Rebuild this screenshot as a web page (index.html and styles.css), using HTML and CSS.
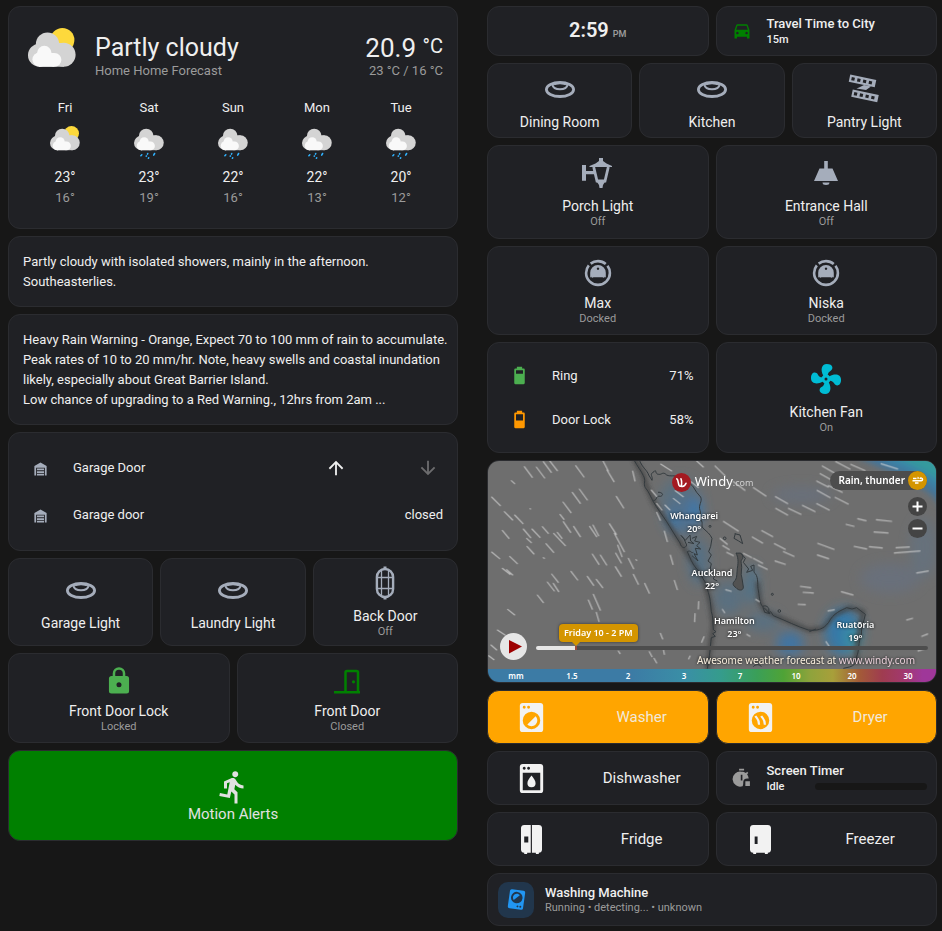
FILE: index.html
```html
<!DOCTYPE html>
<html lang="en">
<head>
    <meta charset="UTF-8">
    <title>Home</title>
    <meta name="viewport" content="width=device-width, initial-scale=1.0">
    <link rel="stylesheet" href="styles.css">
</head>
<body>
    <!-- shared icons -->
    <svg class="sprite" aria-hidden="true">
        <symbol id="cloud" viewBox="0 0 48 56">
            <g fill="#d4d4d4"><circle cx="11.5" cy="27.2" r="11.5"/><circle cx="19.5" cy="16" r="11.6"/><circle cx="35.6" cy="26.8" r="12"/><path d="M11 15h25v23.7H11z"/></g>
            <g fill="#f9f9f9"><circle cx="11.5" cy="31.6" r="7.1"/><circle cx="16.3" cy="25" r="7.2"/><circle cx="26.5" cy="31.8" r="6.9"/><path d="M11 25h15v13.7H11z"/></g>
        </symbol>
        <symbol id="partly" viewBox="0 0 48 56">
            <circle cx="34.4" cy="12" r="12" fill="#fdd93c"/>
            <use href="#cloud" width="48" height="56"/>
        </symbol>
        <symbol id="rainy" viewBox="0 0 48 56">
            <use href="#cloud" width="48" height="56"/>
            <g stroke="#30b3ff" stroke-width="2.500" stroke-linecap="round"><path d="M12.500 46l-1.500 1.500M22 44l-.5 1M33 44l-1.500 2.500M23.500 51l-.5 .5M20 48l-.5 .3"/></g>
        </symbol>
        <symbol id="ring" viewBox="0 0 36 36">
            <g fill="none" stroke="currentColor"><ellipse cx="18" cy="18.500" rx="13.600" ry="7" stroke-width="2.800"/><path d="M10.500 14c1 5.600 14 5.600 15 0M12 13.300c3-1.500 9-1.500 12 0" stroke-width="2"/></g>
        </symbol>
        <symbol id="garage" viewBox="0 0 24 24"><path d="M19,20H17V11H7V20H5V9L12,5L19,9V20M8,12H16V14H8V12M8,15H16V17H8V15M16,18V20H8V18H16Z"/></symbol>
        <symbol id="vacuum" viewBox="0 0 36 36">
            <circle cx="18" cy="18" r="11.900" fill="none" stroke="currentColor" stroke-width="2.600" stroke-dasharray="8.400 2.500 53 2.500 8.400 0" transform="rotate(-90 18 18)"/>
            <path fill-rule="evenodd" d="M10.200 22.500v-4.700a7.800 7.800 0 0 1 15.600 0v4.700l-1.500-.8v1.300l-1.800-.8h-9l-1.800.8v-1.300zM18 12.500a1.200 1.200 0 1 0 .01 0z"/>
        </symbol>
    </svg>

    <main class="dashboard">
        <section class="column">
            <article class="card weather">
                <div class="weather-now">
                    <svg class="weather-icon"><use href="#partly"/></svg>
                    <div class="weather-name">
                        <h1>Partly cloudy</h1>
                        <p>Home Home Forecast</p>
                    </div>
                    <div class="weather-temp">
                        <div class="temp">20.9 <sup>°C</sup></div>
                        <p>23 °C / 16 °C</p>
                    </div>
                </div>
                <div class="forecast">
                    <div class="day"><span>Fri</span><svg><use href="#partly"/></svg><b>23°</b><i>16°</i></div>
                    <div class="day"><span>Sat</span><svg><use href="#rainy"/></svg><b>23°</b><i>19°</i></div>
                    <div class="day"><span>Sun</span><svg><use href="#rainy"/></svg><b>22°</b><i>16°</i></div>
                    <div class="day"><span>Mon</span><svg><use href="#rainy"/></svg><b>22°</b><i>13°</i></div>
                    <div class="day"><span>Tue</span><svg><use href="#rainy"/></svg><b>20°</b><i>12°</i></div>
                </div>
            </article>

            <article class="card note">
                <p>Partly cloudy with isolated showers, mainly in the afternoon.<br>Southeasterlies.</p>
            </article>

            <article class="card note">
                <p>Heavy Rain Warning - Orange, Expect 70 to 100 mm of rain to accumulate. Peak rates of 10 to 20 mm/hr. Note, heavy swells and coastal inundation likely, especially about Great Barrier Island.<br>Low chance of upgrading to a Red Warning., 12hrs from 2am ...</p>
            </article>

            <article class="card entities garage">
                <div class="entity">
                    <svg class="entity-icon"><use href="#garage"/></svg>
                    <span>Garage Door</span>
                    <div class="cover-controls">
                        <button aria-label="Open"><svg viewBox="0 0 24 24"><path d="M13,20H11V8L5.500,13.500L4.080,12.080L12,4.160L19.920,12.080L18.500,13.500L13,8V20Z"/></svg></button>
                        <button aria-label="Close" disabled><svg viewBox="0 0 24 24"><path d="M11,4H13V16L18.500,10.500L19.920,11.920L12,19.840L4.080,11.920L5.500,10.500L11,16V4Z"/></svg></button>
                    </div>
                </div>
                <div class="entity">
                    <svg class="entity-icon"><use href="#garage"/></svg>
                    <span>Garage door</span>
                    <span class="state">closed</span>
                </div>
            </article>

            <div class="row thirds tall">
                <button class="card tile"><svg class="icon"><use href="#ring"/></svg><span class="name">Garage Light</span></button>
                <button class="card tile"><svg class="icon"><use href="#ring"/></svg><span class="name">Laundry Light</span></button>
                <button class="card tile">
                    <svg class="icon" viewBox="0 0 36 36"><g fill="none" stroke="currentColor"><rect x="9.900" y="4" width="16.200" height="28" rx="8.100" stroke-width="2.400"/><path d="M14.500 4v28M21.500 4v28M10 12.500h16M10 23.500h16" stroke-width="1.300"/><path d="M18 1.500v2M18 32.500v2" stroke-width="3"/></g></svg>
                    <span class="name">Back Door</span><span class="sub">Off</span>
                </button>
            </div>

            <div class="row halves locks">
                <button class="card tile">
                    <svg class="icon green" viewBox="-2.300 -2.300 28.600 28.600"><path d="M12,17A2,2 0 0,0 14,15C14,13.890 13.100,13 12,13A2,2 0 0,0 10,15A2,2 0 0,0 12,17M18,8A2,2 0 0,1 20,10V20A2,2 0 0,1 18,22H6A2,2 0 0,1 4,20V10C4,8.890 4.900,8 6,8H7V6A5,5 0 0,1 12,1A5,5 0 0,1 17,6V8H18M12,3A3,3 0 0,0 9,6V8H15V6A3,3 0 0,0 12,3Z"/></svg>
                    <span class="name">Front Door Lock</span><span class="sub">Locked</span>
                </button>
                <button class="card tile">
                    <svg class="icon darkgreen" viewBox="0 0 36 36"><path d="M5 29.300h26M16.500 29V9.500a1.500 1.500 0 0 1 1.500-1.500h9.500a1.500 1.500 0 0 1 1.500 1.500V29" fill="none" stroke="currentColor" stroke-width="2.500"/><circle cx="24.500" cy="18.800" r="1.600"/></svg>
                    <span class="name">Front Door</span><span class="sub">Closed</span>
                </button>
            </div>

            <button class="card tile motion">
                <svg class="icon" viewBox="0 0 24 24"><path d="M13.500,5.500C14.590,5.500 15.500,4.580 15.500,3.500C15.500,2.380 14.590,1.500 13.500,1.500C12.390,1.500 11.500,2.380 11.500,3.500C11.500,4.580 12.390,5.500 13.500,5.500M9.890,19.380L10.890,15L13,17V23H15V15.500L12.890,13.500L13.500,10.500C14.790,12 16.790,13 19,13V11C17.090,11 15.500,10 14.690,8.580L13.690,7C13.290,6.380 12.690,6 12,6C11.690,6 11.500,6.080 11.190,6.080L6,8.280V13H8V9.580L9.790,8.880L8.190,17L3.290,16L2.890,18L9.890,19.380Z"/></svg>
                <span class="name">Motion Alerts</span>
            </button>
        </section>

        <section class="column">
            <div class="row halves top">
                <article class="card clock"><time>2:59</time><small>PM</small></article>
                <article class="card info">
                    <svg class="info-icon darkgreen" viewBox="0 0 24 24"><path fill-rule="evenodd" d="M18.920 5c-.2-.6-.76-1-1.420-1h-11c-.66 0-1.220.4-1.420 1L3 11v10h3v-2h12v2h3V11zM6.500 13a1.500 1.500 0 1 1-.01 0zM17.500 13a1.500 1.500 0 1 1-.01 0zM5 10.500l1.500-4.700h11l1.500 4.700z"/></svg>
                    <div class="info-text"><strong>Travel Time to City</strong><span>15m</span></div>
                </article>
            </div>

            <div class="row thirds lights">
                <button class="card tile"><svg class="icon"><use href="#ring"/></svg><span class="name">Dining Room</span></button>
                <button class="card tile"><svg class="icon"><use href="#ring"/></svg><span class="name">Kitchen</span></button>
                <button class="card tile">
                    <svg class="icon" viewBox="0 0 36 36">
                        <g fill="none" stroke="currentColor"><path d="M3.500 7.200L29.500 12.700M6 22.200L32 27.700" stroke-width="7.400"/><g stroke="#202125" stroke-width="3.200" stroke-dasharray="3.200 2.700"><path d="M5.500 7.600L28.500 12.500M8 22.600L31 27.500"/></g></g>
                        <path d="M13 16.500l5-2.500 7 1.500-5 3.500-9.500-1.500z"/>
                    </svg>
                    <span class="name">Pantry Light</span>
                </button>
            </div>

            <div class="row halves porch">
                <button class="card tile">
                    <svg class="icon" viewBox="0 0 36 36"><path d="M2 10h4v15.700H2zM6 16h8v3.300H6zM19 3h4v3l3.500 2.500L32 11v1H9.500v-1l6-2.500L19 6zM16.300 26h9.200l-2.500 4-.5 3h-3l-.5-3z"/><path d="M13.700 12l3.300 14h8l3.300-14" fill="none" stroke="currentColor" stroke-width="2.800"/></svg>
                    <span class="name">Porch Light</span><span class="sub">Off</span>
                </button>
                <button class="card tile">
                    <svg class="icon" viewBox="0 0 36 36"><path d="M16.200 6h3.600v7.500h4.700L30 26H6l5.500-12.500h4.700zM14.500 27.500h7a3.500 2.500 0 0 1-7 0z"/></svg>
                    <span class="name">Entrance Hall</span><span class="sub">Off</span>
                </button>
            </div>

            <div class="row halves vacuums">
                <button class="card tile"><svg class="icon"><use href="#vacuum"/></svg><span class="name">Max</span><span class="sub">Docked</span></button>
                <button class="card tile"><svg class="icon"><use href="#vacuum"/></svg><span class="name">Niska</span><span class="sub">Docked</span></button>
            </div>

            <div class="row halves power">
                <article class="card entities">
                    <div class="entity">
                        <svg class="entity-icon green" viewBox="0 0 24 24"><path d="M16,10H8V6H16M16.670,4H15V2H9V4H7.330A1.330,1.330 0 0,0 6,5.330V20.670C6,21.400 6.600,22 7.330,22H16.670A1.330,1.330 0 0,0 18,20.670V5.330C18,4.600 17.400,4 16.670,4Z"/></svg>
                        <span>Ring</span><span class="state">71%</span>
                    </div>
                    <div class="entity">
                        <svg class="entity-icon amber" viewBox="0 0 24 24"><path d="M16,13H8V6H16M16.670,4H15V2H9V4H7.330A1.330,1.330 0 0,0 6,5.330V20.670C6,21.400 6.600,22 7.330,22H16.670A1.330,1.330 0 0,0 18,20.670V5.330C18,4.600 17.400,4 16.670,4Z"/></svg>
                        <span>Door Lock</span><span class="state">58%</span>
                    </div>
                </article>
                <button class="card tile">
                    <svg class="icon cyan" viewBox="0 0 24 24"><path d="M12,11A1,1 0 0,0 11,12A1,1 0 0,0 12,13A1,1 0 0,0 13,12A1,1 0 0,0 12,11M12.500,2C17,2 17.110,5.570 14.750,6.750C13.760,7.240 13.320,8.290 13.130,9.220C13.610,9.420 14.030,9.730 14.350,10.130C18.050,8.130 22.030,8.920 22.030,12.500C22.030,17 18.460,17.100 17.280,14.730C16.780,13.740 15.720,13.300 14.790,13.110C14.590,13.590 14.280,14 13.880,14.340C15.870,18.030 15.080,22 11.500,22C7,22 6.910,18.420 9.270,17.240C10.250,16.750 10.690,15.710 10.890,14.790C10.400,14.590 9.970,14.270 9.650,13.870C5.960,15.850 2,15.070 2,11.500C2,7 5.560,6.890 6.740,9.260C7.240,10.250 8.290,10.680 9.220,10.870C9.410,10.390 9.730,9.970 10.140,9.650C8.150,5.960 8.940,2 12.500,2Z"/></svg>
                    <span class="name">Kitchen Fan</span><span class="sub">On</span>
                </button>
            </div>

            <article class="card map">
                <div class="map-stage">
                    <svg class="map-art" viewBox="24 18 1344 624" preserveAspectRatio="xMidYMid slice" aria-hidden="true">
                        <defs>
                            <filter id="soft" x="-50%" y="-50%" width="200%" height="200%"><feGaussianBlur stdDeviation="18"/></filter>
                            <filter id="corner" x="-20%" y="-20%" width="140%" height="140%"><feGaussianBlur stdDeviation="9"/></filter>
                            <filter id="shade" x="-10%" y="-10%" width="120%" height="120%"><feGaussianBlur stdDeviation="7"/></filter>
                        </defs>
                        <path fill="#6e6e6e" d="M0 0h1400v660H0z"/>
                        <!-- rain -->
                        <g filter="url(#soft)">
                            <ellipse cx="600" cy="130" rx="60" ry="60" fill="#5c6f7e"/>
                            <ellipse cx="610" cy="180" rx="55" ry="60" fill="#52708a"/>
                            <ellipse cx="648" cy="165" rx="20" ry="38" fill="#3a78ad"/>
                            <ellipse cx="578" cy="195" rx="22" ry="28" fill="#3f74a0"/>
                            <ellipse cx="655" cy="320" rx="30" ry="70" fill="#557084"/>
                            <ellipse cx="745" cy="430" rx="45" ry="50" fill="#5a7080"/>
                            <ellipse cx="815" cy="390" rx="20" ry="60" fill="#4f7289"/>
                            <ellipse cx="930" cy="565" rx="40" ry="35" fill="#3f75a3"/>
                            <ellipse cx="850" cy="500" rx="50" ry="30" fill="#5a7080"/>
                            <ellipse cx="1090" cy="530" rx="55" ry="70" fill="#3578a8"/>
                            <ellipse cx="1115" cy="550" rx="25" ry="40" fill="#3b8fa4"/>
                            <ellipse cx="965" cy="120" rx="90" ry="25" fill="#69707a"/>
                            <ellipse cx="1230" cy="370" rx="90" ry="45" fill="#69707a"/>
                            <ellipse cx="1330" cy="280" rx="40" ry="90" fill="#66717c"/>
                        </g>
                        <g filter="url(#corner)">
                            <path fill="#43759a" d="M1130 0c70 50 190 60 260 160V0z"/>
                            <path fill="#3a84a8" d="M1190 0c50 40 140 50 200 120V0z"/>
                            <path fill="#369a9e" d="M1240 0c40 25 90 40 150 85V0z"/>
                        </g>
                        <!-- coast shadow and coast line -->
                        <g fill="none" stroke-linejoin="round">
                            <g filter="url(#shade)" stroke="#3c3c3c" stroke-width="12" opacity=".8">
                                <path d="M462 10L490 60L498 90L520 140L560 200L610 278L650 340L675 385L692 450L700 510L690 580L682 645"/>
                                <path d="M832 380L840 440L852 465L885 482L985 525L1030 520L1062 480L1110 458L1150 470L1133 560L1128 620"/>
                            </g>
                            <path fill="#525252" d="M768 294C774 306 776 318 772 340C770 354 772 366 766 376C756 384 758 392 768 398C776 408 790 408 790 396L786 370C780 356 788 340 784 326C780 310 792 316 788 302C784 290 776 296 768 294"/>
                            <g stroke="#333a3e" stroke-width="3">
                                <path d="M462 15C472 34 484 48 490 62C499 76 489 86 496 98C508 112 514 130 520 140C530 158 548 182 560 200C570 216 588 246 600 264C604 280 616 282 620 270L612 252L602 240M622 290C630 308 636 326 650 342L660 352C664 366 674 376 678 388C680 400 690 420 692 450L694 470C700 484 698 506 700 524L708 530L698 536L706 544L694 548C690 580 690 600 682 641"/>
                                <path d="M478 15C488 40 502 46 506 60L516 76C520 64 506 58 522 50C530 40 524 58 536 58C546 60 548 48 560 60C572 66 584 58 596 68C612 76 632 84 640 96L650 112L662 126C668 140 654 150 660 166C666 176 652 184 662 194C672 204 660 214 672 222C680 230 690 236 696 250L692 274L686 290L694 300L684 318"/>
                                <path d="M520 136C534 138 524 120 542 124C556 118 540 110 534 112M622 290C634 284 632 296 640 292M636 250L650 244L644 258L660 262L650 272L662 282L646 280L652 300L642 296L654 318L636 302M606 244L616 256L630 240L632 258L642 266L624 262M684 318L694 326L690 344L706 356L700 372L712 378"/>
                                <path d="M768 294C774 306 776 318 772 340C770 354 772 366 766 376C756 384 758 392 768 398C776 408 790 408 790 396L786 370C780 356 788 340 784 326C780 310 792 316 788 302C784 290 776 296 768 294M784 296L796 310L790 322L806 342L800 352L818 346L812 334L822 330L822 352C836 362 832 386 834 400C838 420 838 446 848 454C862 448 872 462 864 474L872 470L880 482C920 498 950 514 985 525C1010 528 1030 524 1046 502C1060 474 1084 466 1100 458L1116 462L1130 458L1156 478C1152 500 1142 520 1144 540C1134 560 1138 590 1130 604C1132 624 1122 632 1108 636L1090 640M848 454L854 472L870 476L852 458M764 236L780 240L788 266L776 258L762 250L766 236"/>
                                <circle cx="877" cy="418" r="3"/><circle cx="898" cy="468" r="4"/><circle cx="734" cy="250" r="4"/><circle cx="690" cy="214" r="3"/><path d="M820 635c6-8 20-8 24 0M1008 522l-20 8"/>
                            </g>
                        </g>
                        <!-- wind -->
                        <g stroke="#dcdcdc" stroke-width="3.500" stroke-linecap="round" opacity=".72" fill="none">
                            <path d="M133 35L157 67M169 36L194 69M190 20L214 52M208 16L232 47M287 32L312 66M368 16L385 48M381 45L402 80M458 48L465 78M94 77L104 86M35 126L61 152M277 112L301 145M298 102L322 135M249 141L273 173M409 124L431 159M73 170L98 195M104 180L129 206M240 178L252 193M67 226L87 250M130 222L152 248M156 222L180 247M187 215L205 235M250 200L272 232M281 214L301 245M221 235L256 272M232 232L246 250M329 214L350 245M339 210L356 242M388 206L409 238M403 235L433 290M413 270L426 305M141 274L162 297M140 250L154 263M198 266L221 292M35 291L59 311M89 304L112 326M67 340L90 358M80 344L98 360M337 297L357 328M361 300L380 330M407 294L424 324M445 310L461 341M406 335L424 364M215 357L235 382M202 381L223 408M220 385L236 410M273 349L293 375M322 364L341 391M349 373L368 398M460 358L475 388M494 385L508 415M172 420L190 443M83 463L104 480M325 435L337 463M340 418L361 466M349 472L357 500M52 525L75 540M33 570L50 585M26 602L42 614M150 161l2 1M190 308l3 2M468 314l2 2M415 588L420 596"/>
                            <path d="M530 172L541 196M553 228L562 260M571 300L579 328M583 376L592 404M656 440L655 462M645 476L644 500M541 535L548 552M508 590L516 605M522 610L530 624M550 582L553 598M672 545L665 562M630 603L626 612M542 27L575 48M514 105L530 124M530 145L546 165M586 107L610 125M580 130L600 146M555 150L570 165M633 80L655 98M648 16L670 36"/>
                            <path transform="translate(690)" d="M15 33L45 62M70 80L105 106M130 98L168 123M196 125L233 146M197 160L233 180M235 160L273 178M277 151L315 170M320 146L358 165M321 106L360 128M337 33L375 55M330 56L365 75M320 78L355 96M355 92L397 112M375 127L415 147M377 20L420 42M422 28L465 47M513 26L563 42M408 208L432 214M443 191L468 197M499 194L545 199M492 231L534 234M155 227L188 245M127 246L158 264M193 266L226 283M220 290L252 304M323 265L372 283M322 300L356 311M432 274L470 282M478 275L517 279M558 278L598 276M553 294L630 288M620 354L655 348M195 318L226 328M145 330L172 343M40 199L85 228M271 394L302 398M279 412L310 414M264 448L286 449M394 410L429 420M354 468L373 464M590 495L608 490M635 544L653 537M624 588L642 582M348 560L358 575M30 250L52 268M100 295L125 308M130 310L158 325M38 272L58 284M50 292L70 302M47 404L64 409M37 463L44 473M110 538L120 544M137 433L148 440"/>
                        </g>
                    </svg>

                    <a class="windy" href="#windy">
                        <svg viewBox="0 0 18 18"><circle cx="9" cy="9" r="9" fill="#a41a21"/><path d="M4.500 5.500c2 1 1 6.500 3 7s2-4.500 1-7M8.500 12.500c2.500.8 4-.8 4.800-2.800" fill="none" stroke="#fff" stroke-width="1.500" stroke-linecap="round"/></svg>
                        <span>Windy<small>.com</small></span>
                    </a>
                    <div class="place whangarei">Whangarei<br>20°</div>
                    <div class="place auckland">Auckland<br>22°</div>
                    <div class="place hamilton">Hamilton<br>23°</div>
                    <div class="place ruatoria">Ruatōria<br>19°</div>

                    <button class="layer">Rain, thunder
                        <svg viewBox="0 0 19 19"><circle cx="9.500" cy="9.500" r="9.500" fill="#d49500"/><path d="M5 7.500h3.500M4.500 9.700h8.700a1.300 1.300 0 1 0-1.200-1.700M7 12h3.500M9.500 7.500c.8 0 .8-1 0-1" fill="none" stroke="#fff" stroke-width="1.500"/></svg>
                    </button>
                    <div class="zoom">
                        <button aria-label="Zoom in"><svg viewBox="0 0 19 19"><path d="M9.500 4.500v10M4.500 9.500h10"/></svg></button>
                        <button aria-label="Zoom out"><svg viewBox="0 0 19 19"><path d="M4.500 9.500h10"/></svg></button>
                    </div>

                    <div class="player">
                        <button class="play" aria-label="Play"><svg viewBox="0 0 27 27"><path d="M9 7l13 6.500L9 20.500z" fill="#9d0000"/></svg></button>
                        <div class="timeline">
                            <output class="when" for="when">Friday 10 - 2 PM</output>
                            <input id="when" type="range" min="0" max="100" value="10" aria-label="Forecast time">
                        </div>
                    </div>
                    <p class="credit">Awesome weather forecast at <a href="#windy">www.windy.com</a></p>
                </div>
                <div class="legend"><span>mm</span><span>1.5</span><span>2</span><span>3</span><span>7</span><span>10</span><span>20</span><span>30</span></div>
            </article>

            <div class="row halves appliances">
                <button class="card appliance running">
                    <svg viewBox="0 0 24 24"><path d="M14.830,11.170C16.390,12.730 16.390,15.260 14.830,16.830C13.260,18.390 10.730,18.390 9.170,16.830L14.830,11.170M6,2H18A2,2 0 0,1 20,4V20A2,2 0 0,1 18,22H6A2,2 0 0,1 4,20V4A2,2 0 0,1 6,2M7,4A1,1 0 0,0 6,5A1,1 0 0,0 7,6A1,1 0 0,0 8,5A1,1 0 0,0 7,4M10,4A1,1 0 0,0 9,5A1,1 0 0,0 10,6A1,1 0 0,0 11,5A1,1 0 0,0 10,4M12,8A6,6 0 0,0 6,14A6,6 0 0,0 12,20A6,6 0 0,0 18,14A6,6 0 0,0 12,8Z"/></svg>
                    <span>Washer</span>
                </button>
                <button class="card appliance running">
                    <svg viewBox="0 0 24 24"><path d="M6,2H18A2,2 0 0,1 20,4V20A2,2 0 0,1 18,22H6A2,2 0 0,1 4,20V4A2,2 0 0,1 6,2M7,4A1,1 0 0,0 6,5A1,1 0 0,0 7,6A1,1 0 0,0 8,5A1,1 0 0,0 7,4M10,4A1,1 0 0,0 9,5A1,1 0 0,0 10,6A1,1 0 0,0 11,5A1,1 0 0,0 10,4M12,8A6,6 0 0,0 6,14A6,6 0 0,0 12,20A6,6 0 0,0 18,14A6,6 0 0,0 12,8Z"/><path d="M8.500 11c1.500 2.500 2.500 2 2.500 6M12.500 11c1.500 2.500 2.500 2 2.500 6" fill="none" stroke="currentColor" stroke-width="1.500"/></svg>
                    <span>Dryer</span>
                </button>
                <button class="card appliance">
                    <svg viewBox="0 0 24 24"><path fill-rule="evenodd" d="M6 2h12a2 2 0 0 1 2 2v16a2 2 0 0 1-2 2H6a2 2 0 0 1-2-2V4a2 2 0 0 1 2-2zM7 4a1 1 0 1 0 .01 0zM10 4a1 1 0 1 0 .01 0zM6 8v12h12V8z"/><path d="M12 10c1.500 2 2.800 3.400 2.800 5.200a2.800 2.800 0 0 1-5.600 0c0-1.800 1.300-3.200 2.800-5.200z"/></svg>
                    <span>Dishwasher</span>
                </button>
                <article class="card info timer">
                    <svg class="info-icon" viewBox="0 0 24 24"><path fill-rule="evenodd" d="M8.500 1h6v2h-6zM11.500 4.500c2 0 3.700.6 5.200 1.600L18.200 4.600l1.400 1.400-1.500 1.500c1 1.400 1.700 3 1.900 5h-1.500c-3.500 0-5 2-5 4.500 0 1.800 0 3-.8 4.800A9 9 0 1 1 11.500 4.500zM10.500 8v7h2V8zM16 16h5.500v5.500H16z"/></svg>
                    <div class="info-text">
                        <strong>Screen Timer</strong>
                        <div class="timer-state"><label for="timer">Idle</label><progress id="timer" max="100" value="0"></progress></div>
                    </div>
                </article>
                <button class="card appliance">
                    <svg viewBox="0 0 24 24"><path fill-rule="evenodd" d="M7 2h4.500v19H9v1H7v-1a2.200 2.200 0 0 1-2.200-2V4A2.200 2.200 0 0 1 7 2zM7 10v4h2.800v-4zM12.300 2H17a2.200 2.200 0 0 1 2.200 2v15a2.200 2.200 0 0 1-2.200 2v1h-2v-1h-2.700z"/></svg>
                    <span>Fridge</span>
                </button>
                <button class="card appliance">
                    <svg viewBox="0 0 24 24"><path fill-rule="evenodd" d="M7 2h10a2.200 2.200 0 0 1 2.200 2v15a2.200 2.200 0 0 1-2.200 2v1h-2v-1H9v1H7v-1a2.200 2.200 0 0 1-2.200-2V4A2.200 2.200 0 0 1 7 2zM8 10v5h2v-5z"/></svg>
                    <span>Freezer</span>
                </button>
            </div>

            <article class="card machine">
                <div class="badge">
                    <svg viewBox="0 0 24 24"><path transform="rotate(188 12 12)" d="M14.830,11.170C16.390,12.730 16.390,15.260 14.830,16.830C13.260,18.390 10.730,18.390 9.170,16.830L14.830,11.170M6,2H18A2,2 0 0,1 20,4V20A2,2 0 0,1 18,22H6A2,2 0 0,1 4,20V4A2,2 0 0,1 6,2M7,4A1,1 0 0,0 6,5A1,1 0 0,0 7,6A1,1 0 0,0 8,5A1,1 0 0,0 7,4M10,4A1,1 0 0,0 9,5A1,1 0 0,0 10,6A1,1 0 0,0 11,5A1,1 0 0,0 10,4M12,8A6,6 0 0,0 6,14A6,6 0 0,0 12,20A6,6 0 0,0 18,14A6,6 0 0,0 12,8Z"/></svg>
                </div>
                <div><strong>Washing Machine</strong><p>Running • detecting... • unknown</p></div>
            </article>
        </section>
    </main>
</body>
</html>
```
FILE: styles.css
```css
* {
    box-sizing: border-box;
}
body {
    margin: 0;
    background: #171717;
    color: #efefef;
    font-family: Roboto, 'Liberation Sans', sans-serif;
    font-size: 13px;
    line-height: 20px;
}
h1, p {
    margin: 0;
    font-weight: 400;
}
button {
    font: inherit;
    color: inherit;
    border: 0;
    padding: 0;
    background: none;
    cursor: pointer;
}
svg {
    fill: currentColor;
    flex: none;
}
.sprite {
    position: absolute;
    width: 0;
    height: 0;
}

/* grid */
.dashboard {
    display: grid;
    grid-template-columns: 1fr 1fr;
    align-items: start;
    gap: 29px;
    padding: 6px 5px 5px 8px;
}
.column {
    display: flex;
    flex-direction: column;
    gap: 7px;
    min-width: 0;
}
.row {
    display: grid;
    gap: 7px;
}
.halves {
    grid-template-columns: 1fr 1fr;
}
.thirds {
    grid-template-columns: 1fr 1fr 1fr;
}
.card {
    background: #202125;
    border: 1px solid #2b2c30;
    border-radius: 12px;
    min-width: 0;
}

/* weather */
.weather {
    padding: 21px 14px 20px 19px;
}
.weather-now {
    display: flex;
    gap: 19px;
    height: 48px;
}
.weather-icon {
    width: 48px;
    height: 56px;
}
.weather-name {
    flex: 1;
}
.weather-name h1, .temp {
    font-size: 25px;
    line-height: 32px;
    padding-top: 4px;
}
.weather-name p, .weather-temp p {
    color: #9b9b9b;
    line-height: 14px;
}
.weather-temp {
    text-align: right;
}
.temp {
    font-size: 26px;
}
.temp sup {
    font-size: 20px;
    line-height: 20px;
    vertical-align: 4px;
}
.forecast {
    display: grid;
    grid-template-columns: repeat(5, 1fr);
    padding-top: 22px;
    margin-left: -5px;
}
.day {
    display: flex;
    flex-direction: column;
    align-items: center;
}
.day svg {
    width: 30px;
    height: 35px;
    margin: 8px 0 5px;
}
.day b {
    font-size: 14px;
    font-weight: 400;
    line-height: 22px;
}
.day i {
    font-style: normal;
    color: #9b9b9b;
}

.note {
    padding: 15px 6px 14px 14px;
}

/* entity rows */
.entities {
    display: flex;
    flex-direction: column;
    justify-content: center;
    padding: 9px 14px;
}
.garage {
    gap: 7px;
    padding: 15px 14px;
}
.entity {
    display: flex;
    align-items: center;
    min-height: 40px;
}
.power .entities {
    gap: 4px;
}
.entity-icon {
    width: 21px;
    height: 21px;
    margin: 0 22px 0 7px;
    color: #a5adbb;
}
.entity-icon.green {
    color: #4caf50;
}
.entity-icon.amber {
    color: #ff9800;
}
.state {
    margin-left: auto;
}
.cover-controls {
    display: flex;
    gap: 52px;
    margin: 0 -5px 0 auto;
}
.cover-controls button {
    width: 40px;
    height: 40px;
}
.cover-controls button:disabled {
    color: #6c6c6e;
    cursor: default;
}
.cover-controls svg {
    display: block;
    width: 22px;
    height: 22px;
    margin: auto;
}

/* tiles */
.tile {
    display: flex;
    flex-direction: column;
    align-items: center;
    justify-content: center;
    padding: 5px;
}
.icon {
    width: 36px;
    height: 36px;
    margin-bottom: 6px;
    color: #a5adbb;
}
.name {
    font-size: 14px;
    line-height: 18px;
}
.sub {
    font-size: 11px;
    line-height: 14px;
    color: #9b9b9b;
}
.tall .tile {
    min-height: 88px;
}
.locks .tile {
    min-height: 90px;
}
.locks .icon, .vacuums .icon {
    margin-bottom: 3px;
}
.lights .tile {
    min-height: 75px;
}
.porch .tile {
    min-height: 94px;
}
.vacuums .tile {
    min-height: 89px;
}
.power .tile {
    min-height: 111px;
}
.icon.green {
    color: #4caf50;
}
.darkgreen {
    color: #008000;
}
.cyan {
    color: #00bcd4;
}
.motion {
    min-height: 91px;
    background: #008000;
    color: #e1e1e1;
}
.motion .icon {
    color: #e1e1e1;
    margin-bottom: 0;
}
.motion .name {
    font-size: 15px;
}

/* clock, travel time, timer */
.top .card {
    min-height: 50px;
}
.clock {
    display: flex;
    align-items: baseline;
    justify-content: center;
    gap: 4px;
    padding: 11px 10px 8px;
    line-height: 24px;
}
.clock time {
    font-size: 20px;
    font-weight: 600;
}
.clock small {
    font-size: 9px;
    font-weight: 600;
    color: #9b9b9b;
}
.info {
    display: flex;
    align-items: center;
    gap: 15px;
    padding: 6px 9px 6px 15px;
}
.info-icon {
    width: 20px;
    height: 20px;
}
.info-text {
    flex: 1;
}
.info strong, .machine strong {
    display: block;
    font-weight: 500;
    line-height: 16px;
}
.info span, .info label {
    display: block;
    font-size: 11px;
    line-height: 15px;
    font-weight: 500;
}
.timer .info-icon {
    color: #9b9b9b;
}
.timer-state {
    display: flex;
    align-items: center;
    justify-content: space-between;
}
.timer progress {
    appearance: none;
    width: 70%;
    height: 7px;
    border: 0;
}
.timer progress::-webkit-progress-bar {
    background: #171717;
    border-radius: 4px;
}

/* weather map */
.map {
    overflow: hidden;
    font-family: 'Noto Sans', 'Open Sans', sans-serif;
    color: #fff;
}
.map-stage {
    position: relative;
    height: 208px;
}
.map-art {
    display: block;
    width: 100%;
    height: 100%;
}
.place, .windy, .credit, .layer, .zoom, .player {
    position: absolute;
}
.windy {
    left: 41%;
    top: 10px;
    display: flex;
    align-items: center;
    gap: 4px;
    color: #fff;
    font-size: 13px;
    text-decoration: none;
}
.windy svg {
    width: 19px;
    height: 19px;
}
.windy small {
    font-size: 9px;
    color: #d0d0d0;
}
.place {
    transform: translateX(-50%);
    font-size: 9px;
    font-weight: 600;
    line-height: 13px;
    text-align: center;
    text-shadow: 0 0 3px #000;
}
.whangarei {
    left: 46%;
    top: 48px;
}
.auckland {
    left: 50%;
    top: 105px;
}
.hamilton {
    left: 55%;
    top: 153px;
}
.ruatoria {
    left: 82%;
    top: 157px;
}
.layer {
    right: 9px;
    top: 10px;
    display: flex;
    align-items: center;
    gap: 3px;
    padding-left: 8px;
    border-radius: 10px;
    background: #4d4d4d;
    font-size: 10px;
    font-weight: 600;
    line-height: 19px;
}
.layer svg {
    width: 19px;
    height: 19px;
}
.zoom {
    right: 9px;
    top: 36px;
    display: flex;
    flex-direction: column;
    gap: 3px;
}
.zoom button {
    width: 19px;
    height: 19px;
    border-radius: 50%;
    background: #444;
}
.zoom svg {
    display: block;
    stroke: #fff;
    stroke-width: 2;
}
.player {
    left: 12px;
    right: 8px;
    bottom: 9px;
    display: flex;
    align-items: center;
    gap: 9px;
}
.play {
    width: 27px;
    height: 27px;
    border-radius: 50%;
    background: #e6e6e6;
}
.play svg {
    display: block;
}
.timeline {
    position: relative;
    flex: 1;
    display: flex;
}
.timeline input {
    appearance: none;
    width: 100%;
    height: 4px;
    margin: 2px 0 0;
    border-radius: 2px;
    background: linear-gradient(90deg, #e6e6e6 10%, #4d4d4d 10%);
}
.timeline input::-webkit-slider-thumb {
    appearance: none;
    width: 2px;
    height: 4px;
    background: #9d4a3c;
}
.when {
    position: absolute;
    left: 23px;
    bottom: 8px;
    padding: 0 5px;
    border-radius: 4px;
    background: #d49500;
    font-size: 9px;
    font-weight: 600;
    line-height: 18px;
    white-space: nowrap;
    box-shadow: 0 0 3px #333;
}
.when::after {
    content: '';
    position: absolute;
    left: 13px;
    top: 100%;
    border: 4px solid transparent;
    border-top-color: #d49500;
    border-bottom: 0;
}
.credit {
    right: 21px;
    bottom: 1px;
    font-size: 10px;
    line-height: 16px;
    color: #f8eedd;
    text-shadow: 0 0 3px #000;
}
.credit a {
    color: #e8cfd8;
    text-decoration: none;
}
.legend {
    display: flex;
    background: linear-gradient(90deg, #3c7ba5 32%, #3a8fa6 44%, #359c8c 52%, #3a9f58 60%, #4fa336 66%, #8fa33c 72%, #a89f3a 77%, #a35a38 83%, #9f3c50 88%, #a2386f 93%, #9f3799 97%);
}
.legend span {
    flex: 1;
    text-align: center;
    font-size: 8px;
    font-weight: 600;
    line-height: 13px;
}

/* appliances */
.appliances > .card {
    min-height: 54px;
}
.appliance {
    display: grid;
    grid-template-columns: 2fr 3fr;
    align-items: center;
    justify-items: center;
    font-size: 15px;
}
.appliance svg {
    width: 35px;
    height: 35px;
    color: #f2f2f2;
}
.appliance.running {
    background: #ffa500;
    color: #f2e9da;
}

.machine {
    display: flex;
    align-items: center;
    gap: 11px;
    padding: 7px 10px;
    min-height: 53px;
}
.badge {
    display: flex;
    align-items: center;
    justify-content: center;
    width: 36px;
    height: 36px;
    border-radius: 10px;
    background: #21364c;
}
.badge svg {
    width: 23px;
    height: 23px;
    color: #2196f3;
}
.machine p {
    font-size: 11px;
    line-height: 14px;
    color: #9b9b9b;
}
```
